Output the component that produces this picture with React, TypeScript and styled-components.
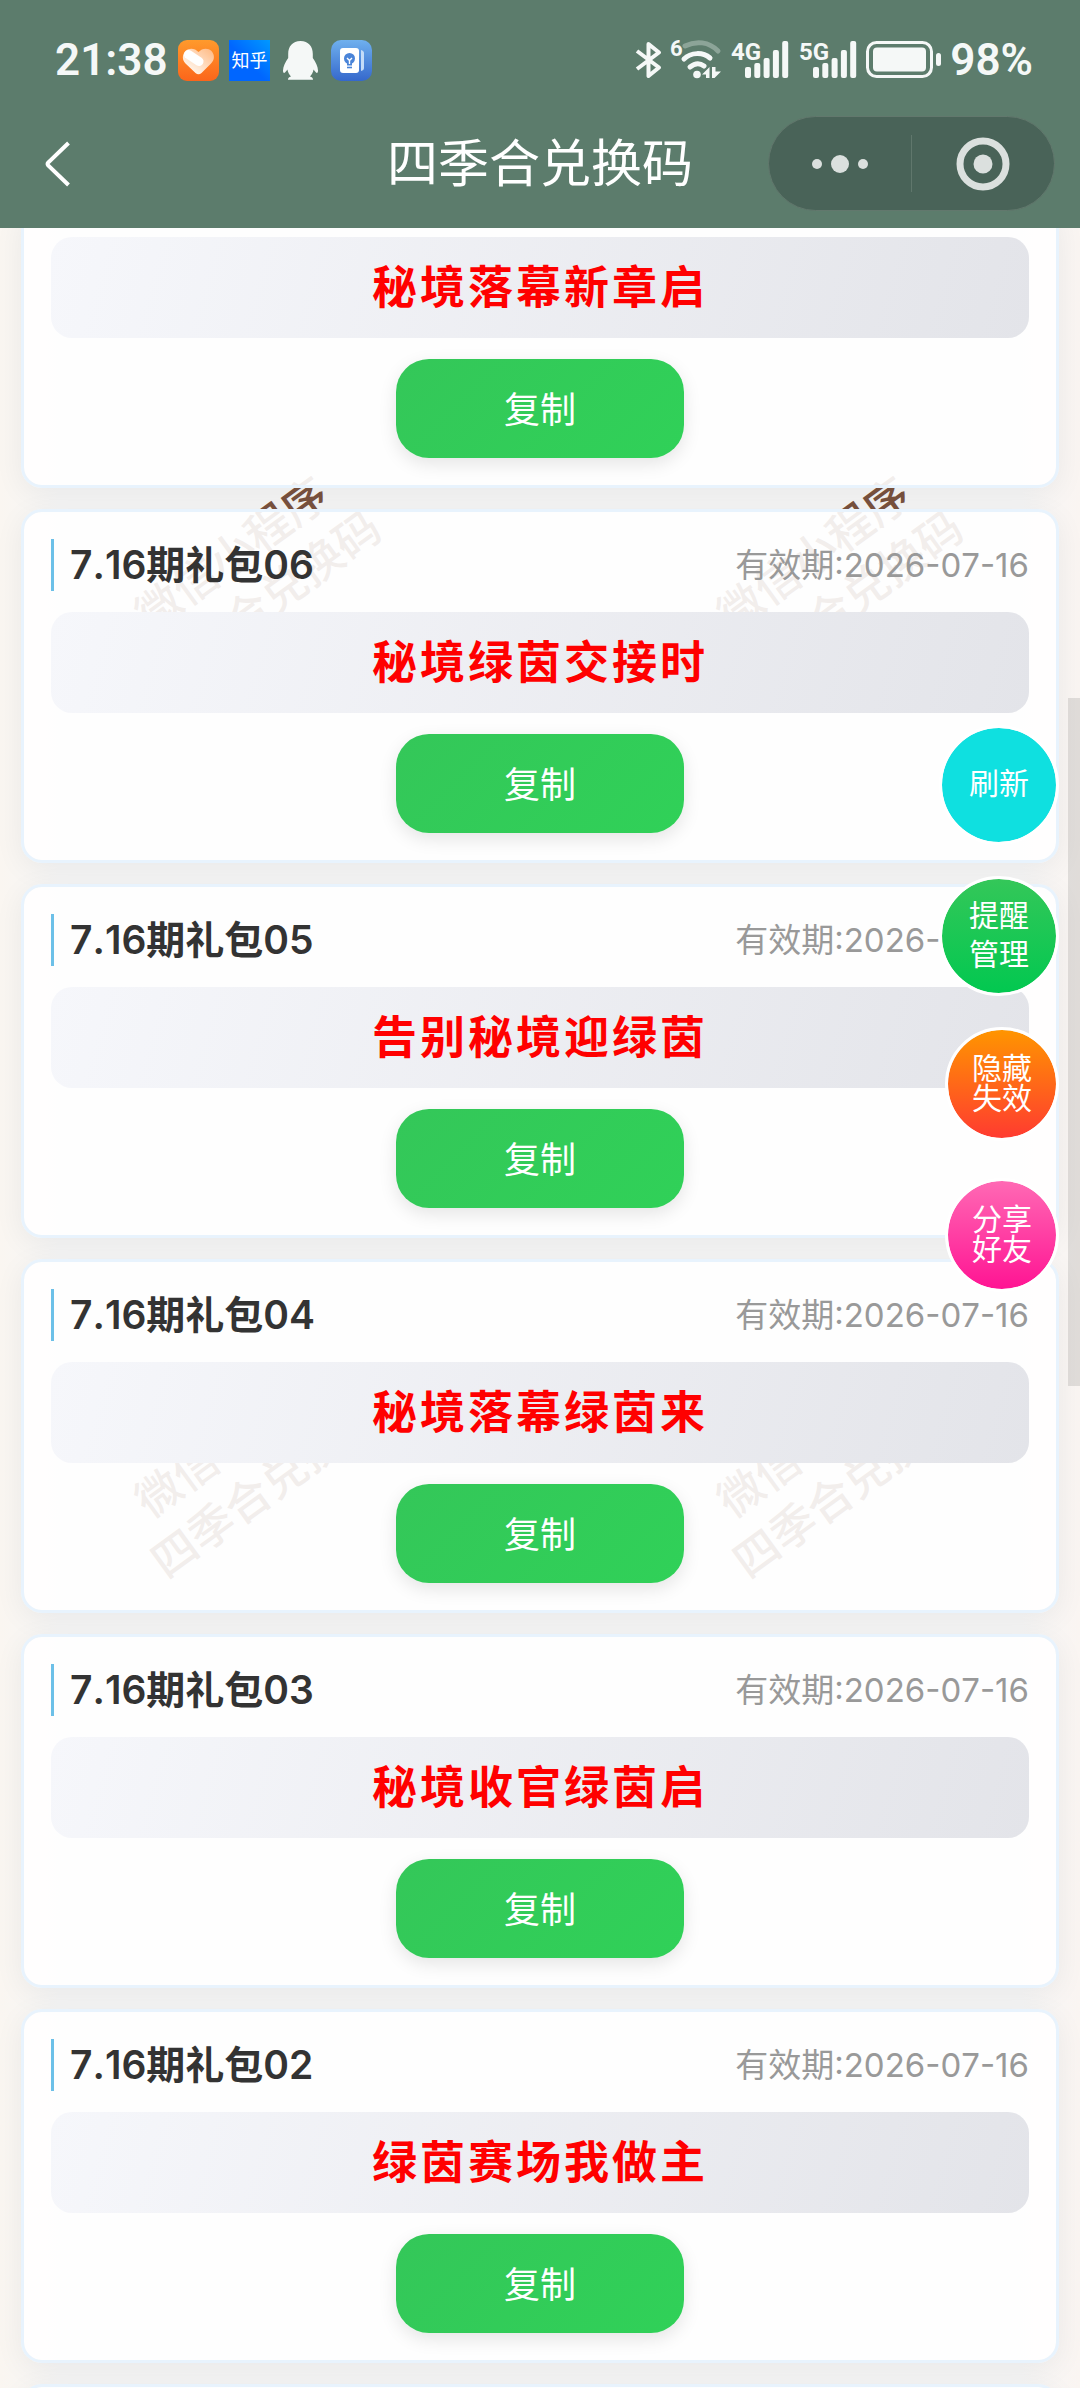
import React, { useLayoutEffect, useRef } from "react";
import styled, { createGlobalStyle, css } from "styled-components";

const latinCjk = `Inter, "Noto Sans CJK SC", sans-serif`;
const statusFont = `Roboto, "Noto Sans CJK SC", sans-serif`;

const GlobalStyle = createGlobalStyle`
  *, *::before, *::after { box-sizing: border-box; }
  body { margin: 0; background: #f7f6f4; font-family: ${latinCjk}; font-kerning: none; }
  button { font-family: inherit; border: 0; padding: 0; cursor: pointer; }
  svg { display: block; overflow: visible; }
`;

const Screen = styled.div`
  position: relative;
  display: flex;
  flex-direction: column;
  height: 100vh;
  overflow: hidden;
  background: linear-gradient(90deg, #faf6f1, #f6f6f6 60px, #f6f6f6 calc(100% - 60px), #faf5f2);
`;

const Header = styled.header`
  position: relative;
  z-index: 2;
  flex: none;
  background: #5c7c6c;
  color: #fff;
`;

const StatusBar = styled.div`
  display: flex;
  align-items: center;
  justify-content: space-between;
  height: 99px;
  padding: 21px 47px 0 55px;
  font-family: ${statusFont};
  font-size: 44px;
  font-weight: 600;
  line-height: 48px;
  color: #f5f8f7;
`;

const StatusGroup = styled.div<{ $gap: number }>`
  display: flex;
  align-items: center;
  gap: ${(p) => p.$gap}px;
`;

const NavBar = styled.div`
  display: grid;
  grid-template-columns: 1fr auto 1fr;
  align-items: center;
  height: 129px;
  padding: 0 25px;
`;

const BackButton = styled.button`
  justify-self: start;
  display: grid;
  place-items: center;
  width: 66px;
  height: 60px;
  background: none;
`;

const NavTitle = styled.h1`
  margin: 0;
  font-size: 51px;
  font-weight: 400;
  line-height: 60px;
`;

const Capsule = styled.div`
  justify-self: end;
  display: flex;
  align-items: center;
  width: 287px;
  height: 95px;
  border: 1px solid #62786d;
  border-radius: 48px;
  background: #496358;
`;

const CapsuleButton = styled.button`
  flex: 1;
  display: grid;
  place-items: center;
  height: 93px;
  background: none;
`;

const CapsuleDivider = styled.span`
  width: 1px;
  height: 57px;
  background: #60776c;
`;

const Main = styled.main`
  position: relative;
  z-index: 1;
  flex: 1;
  min-height: 0;
  overflow-y: auto;
  scrollbar-width: none;
`;

const CardList = styled.ul`
  display: flex;
  flex-direction: column;
  gap: 21px;
  margin: 0;
  padding: 0 21px 21px;
  list-style: none;
`;

const Card = styled.li`
  display: flex;
  flex-direction: column;
  gap: 21px;
  min-height: 120px;
  padding: 27px;
  border: 3px solid #e8f3fd;
  border-radius: 21px;
  background: rgba(255, 255, 255, 0.9);
  background-clip: padding-box;
  box-shadow: 0 6px 30px rgba(0, 0, 0, 0.06);
`;

const CardHead = styled.div`
  display: flex;
  align-items: center;
  justify-content: space-between;
`;

const CardTitle = styled.h2`
  margin: 0;
  padding-left: 16px;
  border-left: 3px solid #6cc0e8;
  font-size: 39px;
  font-weight: 600;
  line-height: 52px;
  color: #333;
`;

const Expiry = styled.span`
  font-size: 33px;
  line-height: 48px;
  color: #999;
`;

const Code = styled.p`
  margin: 0;
  padding: 18px 21px;
  border-radius: 21px;
  background: linear-gradient(105deg, #f6f7fb, #e3e4e9);
  font-size: 45px;
  font-weight: 700;
  line-height: 65px;
  letter-spacing: 3px;
  text-align: center;
  color: #f00;
`;

const CopyButton = styled.button`
  align-self: center;
  width: 288px;
  height: 99px;
  padding-bottom: 4px;
  border-radius: 33px;
  background: linear-gradient(135deg, #34c759, #30d158);
  box-shadow: 0 6px 18px rgba(0, 0, 0, 0.1);
  font-size: 36px;
  color: #fff;
`;

const WatermarkLayer = styled.div`
  position: absolute;
  top: 135px;
  left: -42px;
  display: grid;
  grid-template-columns: repeat(2, 582px);
  grid-auto-rows: 886px;
  place-items: center;
`;

const Watermark = styled.span`
  font-size: 45px;
  font-weight: 500;
  line-height: 58px;
  text-align: center;
  white-space: pre;
  color: #7a523e;
  transform: rotate(-36deg);
`;

const ScrollThumb = styled.div`
  position: absolute;
  z-index: 2;
  top: 698px;
  right: 0;
  width: 12px;
  height: 688px;
  background: rgba(0, 0, 0, 0.1);
`;

const FloatingActions = styled.div`
  position: absolute;
  z-index: 3;
  top: 725px;
  right: 21px;
  display: grid;
  grid-auto-rows: 151px;
  justify-items: end;
  align-items: start;
`;

const FloatingButton = styled.button<{ $fill: string; $compact?: boolean }>`
  padding-bottom: 3px;
  border: 3px solid #fff;
  border-radius: 50%;
  background: ${(p) => p.$fill};
  background-clip: padding-box;
  font-size: 30px;
  white-space: pre;
  color: #fff;
  ${(p) =>
    p.$compact
      ? css`
          width: 114px;
          height: 114px;
          line-height: 30px;
        `
      : css`
          width: 120px;
          height: 120px;
          line-height: 39px;
        `}
`;

const HeartAppIcon = () => (
  <svg width="41" height="41" viewBox="0 0 41 41" aria-hidden="true">
    <defs>
      <linearGradient id="heartBg" x1="0" y1="0" x2="0" y2="1">
        <stop offset="0" stopColor="#ff9a2c" />
        <stop offset="1" stopColor="#fb651b" />
      </linearGradient>
      <linearGradient id="heartFill" x1="0" y1="1" x2="1" y2="0">
        <stop offset="0.2" stopColor="#fff4ea" />
        <stop offset="1" stopColor="#ffb880" />
      </linearGradient>
    </defs>
    <rect width="41" height="41" rx="9" fill="url(#heartBg)" />
    <path
      d="M20.500 12C17 8 11 7.500 7.500 11C4 14.500 4 20 7.500 23.500L17.500 33C19.500 34.800 21.500 34.800 23.500 33L33 23.500C36.800 20 36.800 14.500 33.500 11C30 7.500 24 8 20.500 12Z"
      fill="url(#heartFill)"
    />
    <path d="M10.500 14.500L21 21.500" stroke="#fff" strokeWidth="9" strokeLinecap="round" />
  </svg>
);

const ZhihuIcon = () => (
  <svg width="41" height="41" viewBox="0 0 41 41" aria-hidden="true">
    <defs>
      <linearGradient id="zhihuBg" x1="0" y1="1" x2="1" y2="0">
        <stop offset="0.45" stopColor="#0066ff" />
        <stop offset="1" stopColor="#0099ff" />
      </linearGradient>
    </defs>
    <rect width="41" height="41" fill="url(#zhihuBg)" />
    <text
      x="20.500"
      y="27"
      textAnchor="middle"
      fontFamily="'Noto Sans CJK SC', sans-serif"
      fontSize="18"
      fontWeight="400"
      fill="#fff"
    >
      知乎
    </text>
  </svg>
);

const PenguinIcon = () => (
  <svg width="41" height="41" viewBox="0 0 41 41" aria-hidden="true">
    <path
      d="M20.500 1C12.500 1 8.200 6.500 8.200 14V18C5.500 22 3 26.500 3 30.500C3 33 4 33.500 5.200 32.300C6.200 31.300 7 30.300 7.400 29.600C8 32.500 9.300 34.800 11 36.500C9 37.200 7.800 38.200 8 39.800H33C33.200 38.200 32 37.200 30 36.500C31.700 34.800 33 32.500 33.600 29.600C34 30.300 34.800 31.300 35.800 32.300C37 33.500 38 33 38 30.500C38 26.500 35.500 22 32.800 18V14C32.800 6.500 28.500 1 20.500 1Z"
      fill="#f5f8f7"
    />
  </svg>
);

const IdeaAppIcon = () => (
  <svg width="41" height="41" viewBox="0 0 41 41" aria-hidden="true">
    <defs>
      <linearGradient id="ideaBg" x1="0" y1="0" x2="0" y2="1">
        <stop offset="0" stopColor="#6fb0ee" />
        <stop offset="1" stopColor="#3568cc" />
      </linearGradient>
    </defs>
    <rect width="41" height="41" rx="10" fill="url(#ideaBg)" />
    <rect x="9" y="8" width="19" height="25" rx="3" fill="#fff" />
    <path d="M30 10C32 10.500 33 11.500 33 13V28C33 29.500 32 30.500 30 31Z" fill="#c4dcf8" />
    <circle cx="18.500" cy="18.500" r="5.500" fill="#4a84d8" />
    <rect x="16" y="22.500" width="5" height="3" fill="#4a84d8" />
    <path d="M16 27.500H21" stroke="#4a84d8" strokeWidth="1.600" />
    <path d="M16 18L18.500 20.500L21 18M18.500 20.500V24" fill="none" stroke="#fff" strokeWidth="1.400" />
  </svg>
);

const BluetoothIcon = () => (
  <svg width="26" height="44" viewBox="0 0 26 44" aria-label="Bluetooth" role="img">
    <path
      d="M1 13L23 29.500L12.500 38V6L23 14.500L1 31"
      fill="none"
      stroke="#f5f8f7"
      strokeWidth="4"
      strokeLinejoin="round"
    />
  </svg>
);

const WifiIcon = () => (
  <svg width="52" height="44" viewBox="0 0 52 44" aria-label="Wi-Fi 6" role="img">
    <text x="0" y="18" fontFamily="Roboto, sans-serif" fontSize="22" fontWeight="700" fill="#f5f8f7">
      6
    </text>
    <g fill="none" strokeLinecap="round">
      <path d="M15 8C26 2.500 39 3.500 48 13" stroke="#8ca498" strokeWidth="5" />
      <path d="M14 21C21 14 33 14 40 20" stroke="#f5f8f7" strokeWidth="5" />
      <path d="M20 29C25 25 30 25 34 28" stroke="#f5f8f7" strokeWidth="5" />
    </g>
    <circle cx="27" cy="36.500" r="3.800" fill="#f5f8f7" />
    <path d="M32 36.500L39.500 29V40H36V36.500ZM42 29V40H44.500L51 33.500H45.500V29Z" fill="#f5f8f7" />
  </svg>
);

const SignalIcon = ({ label }: { label: string }) => (
  <svg width="60" height="44" viewBox="0 0 60 44" aria-label={`${label} signal`} role="img">
    <text x="1" y="22" fontFamily="Roboto, sans-serif" fontSize="24" fontWeight="700" fill="#f5f8f7">
      {label}
    </text>
    {[29, 25, 20, 12, 3].map((top, i) => (
      <rect key={top} x={15 + i * 9.3} y={top} width="6" height={40 - top} rx="2" fill="#f5f8f7" />
    ))}
  </svg>
);

const BatteryIcon = () => (
  <svg width="76" height="44" viewBox="0 0 76 44" aria-label="Battery" role="img">
    <rect x="1.500" y="4.500" width="64" height="34" rx="9" fill="none" stroke="#f5f8f7" strokeWidth="3" />
    <rect x="7" y="9.500" width="53" height="24" rx="4" fill="#f5f8f7" />
    <rect x="70" y="15" width="5" height="13" rx="2.500" fill="#f5f8f7" />
  </svg>
);

const BackIcon = () => (
  <svg width="28" height="48" viewBox="0 0 28 48" aria-hidden="true">
    <path
      d="M24.500 3L4.200 22.500Q3 24 4.200 25.500L24.500 45"
      fill="none"
      stroke="#fff"
      strokeWidth="4"
    />
  </svg>
);

const MoreIcon = () => (
  <svg width="60" height="20" viewBox="0 0 60 20" aria-hidden="true" fill="#dbe0de">
    <circle cx="7" cy="10" r="5" />
    <circle cx="30" cy="10" r="9" />
    <circle cx="53" cy="10" r="5" />
  </svg>
);

const CloseRingIcon = () => (
  <svg width="54" height="54" viewBox="0 0 54 54" aria-hidden="true">
    <circle cx="27" cy="27" r="23" fill="none" stroke="#dbe0de" strokeWidth="7" />
    <circle cx="27" cy="27" r="9.500" fill="#dbe0de" />
  </svg>
);

interface Gift {
  title?: string;
  code: string;
}

const expiry = "有效期:2026-07-16";

const gifts: Gift[] = [
  { code: "秘境落幕新章启" },
  { title: "7.16期礼包06", code: "秘境绿茵交接时" },
  { title: "7.16期礼包05", code: "告别秘境迎绿茵" },
  { title: "7.16期礼包04", code: "秘境落幕绿茵来" },
  { title: "7.16期礼包03", code: "秘境收官绿茵启" },
  { title: "7.16期礼包02", code: "绿茵赛场我做主" },
];

const watermarkText = "微信小程序\n四季合兑换码";

export default function App() {
  const mainRef = useRef<HTMLElement>(null);

  useLayoutEffect(() => {
    if (mainRef.current) mainRef.current.scrollTop = 21;
  }, []);

  return (
    <>
      <GlobalStyle />
      <Screen>
        <WatermarkLayer aria-hidden="true">
          {[0, 1, 2, 3].map((n) => (
            <Watermark key={n}>{watermarkText}</Watermark>
          ))}
        </WatermarkLayer>

        <Header>
          <StatusBar>
            <StatusGroup $gap={10}>
              <span>21:38</span>
              <HeartAppIcon />
              <ZhihuIcon />
              <PenguinIcon />
              <IdeaAppIcon />
            </StatusGroup>
            <StatusGroup $gap={8}>
              <BluetoothIcon />
              <WifiIcon />
              <SignalIcon label="4G" />
              <SignalIcon label="5G" />
              <BatteryIcon />
              <span>98%</span>
            </StatusGroup>
          </StatusBar>
          <NavBar>
            <BackButton aria-label="返回">
              <BackIcon />
            </BackButton>
            <NavTitle>四季合兑换码</NavTitle>
            <Capsule>
              <CapsuleButton aria-label="更多">
                <MoreIcon />
              </CapsuleButton>
              <CapsuleDivider />
              <CapsuleButton aria-label="关闭">
                <CloseRingIcon />
              </CapsuleButton>
            </Capsule>
          </NavBar>
        </Header>

        <Main ref={mainRef}>
          <CardList>
            {gifts.map((gift) => (
              <Card key={gift.code}>
                {gift.title && (
                  <CardHead>
                    <CardTitle>{gift.title}</CardTitle>
                    <Expiry>{expiry}</Expiry>
                  </CardHead>
                )}
                <Code>{gift.code}</Code>
                <CopyButton>复制</CopyButton>
              </Card>
            ))}
            <Card aria-hidden="true" />
          </CardList>
        </Main>

        <ScrollThumb />
        <FloatingActions>
          <FloatingButton $fill="#0fe0e0">刷新</FloatingButton>
          <FloatingButton $fill="linear-gradient(#34c759, #02c850)">{"提醒\n管理"}</FloatingButton>
          <FloatingButton $compact $fill="linear-gradient(#ff9500, #ff3b30)">
            {"隐藏\n失效"}
          </FloatingButton>
          <FloatingButton $compact $fill="linear-gradient(#ff69b4, #ff1493)">
            {"分享\n好友"}
          </FloatingButton>
        </FloatingActions>
      </Screen>
    </>
  );
}
